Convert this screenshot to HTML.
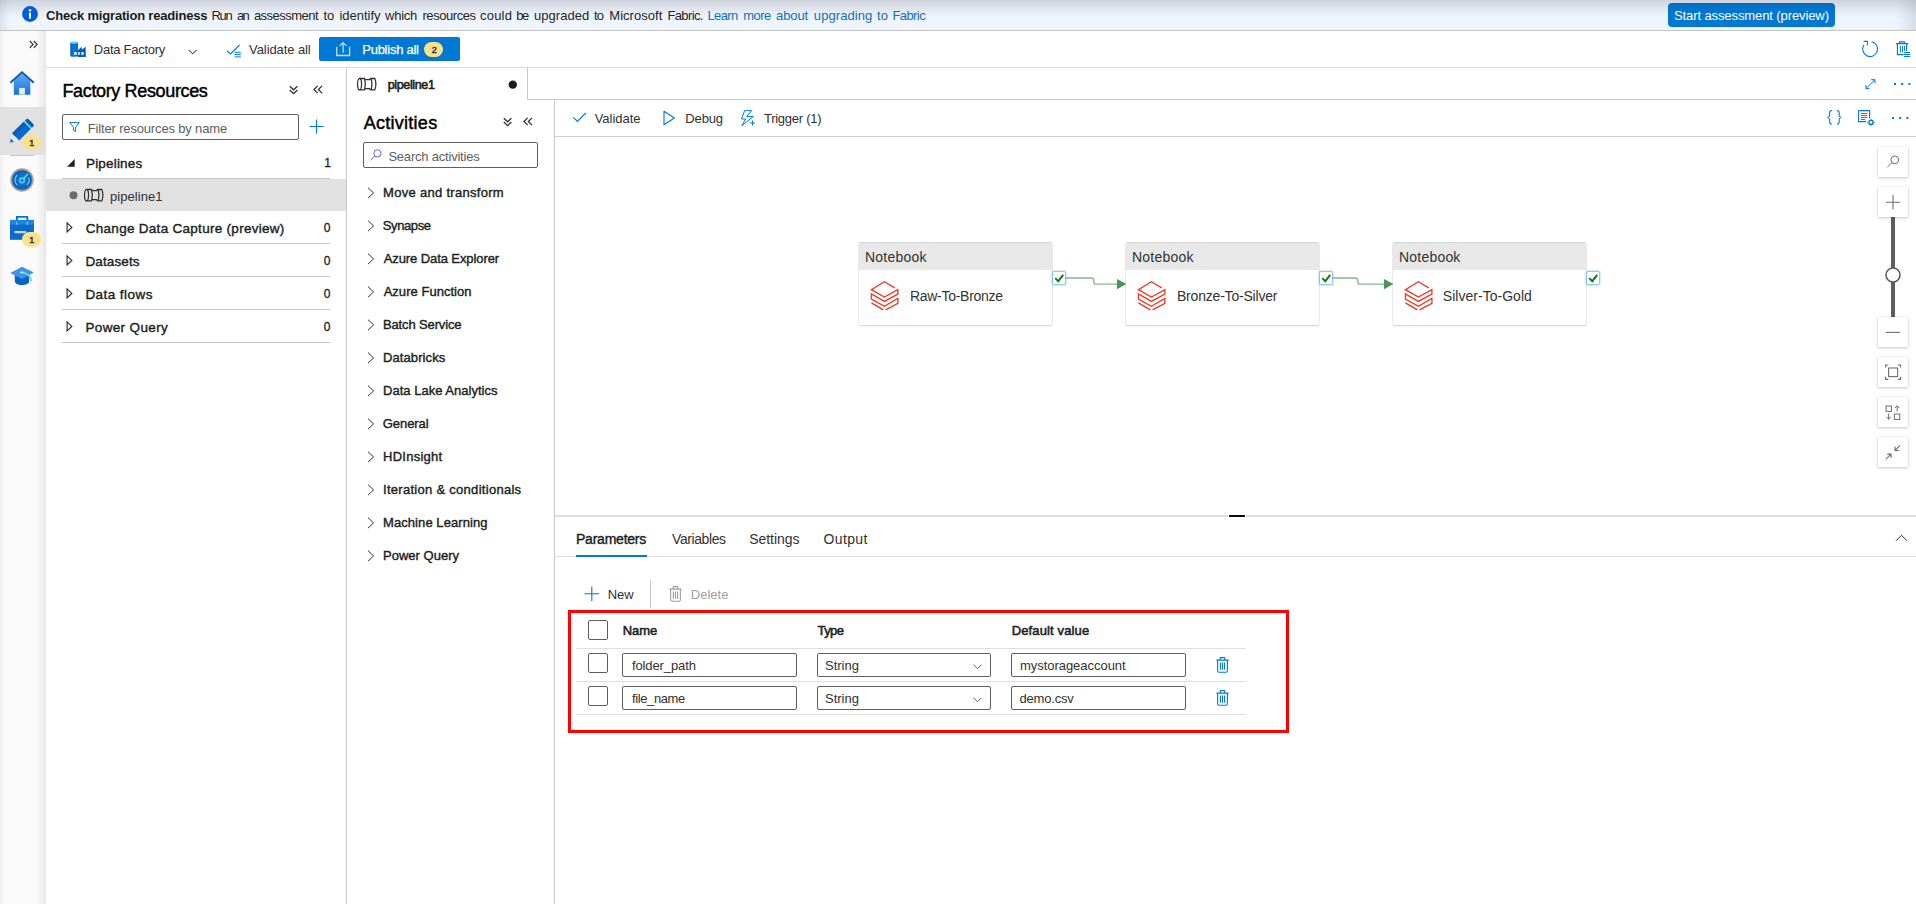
<!DOCTYPE html>
<html lang="en"><head><meta charset="utf-8"><title>pipeline1 - Azure Data Factory</title>
<style>
html,body{margin:0;padding:0}
body{width:1916px;height:904px;position:relative;overflow:hidden;background:#fff;font-family:"Liberation Sans",sans-serif;font-size:13px;color:#323130}
.t{position:absolute;white-space:pre;line-height:1.2}
.pb{display:inline-block;width:0;height:0}
.a{position:absolute;box-sizing:border-box}
svg{position:absolute;overflow:visible}
.ln{position:absolute;background:#c8c8c8}
.inp{position:absolute;box-sizing:border-box;border:1px solid #605e5c;border-radius:2px;background:#fff}
.cb{position:absolute;box-sizing:border-box;border:1px solid #605e5c;border-radius:2px;background:#fff}
.zb{position:absolute;box-sizing:border-box;width:30px;height:30px;background:#fff;box-shadow:0 1px 3px rgba(0,0,0,.22),0 0 1px rgba(0,0,0,.12)}
.node{position:absolute;box-sizing:border-box;width:194px;height:84px;border:1px solid #e9e9e9;border-top-color:#d2d2d2;border-bottom-color:#dadada;border-radius:3px;background:#fff;box-shadow:0 1px 1px rgba(0,0,0,.05)}
.node .hd{position:absolute;left:0;top:0;right:0;height:27px;background:#e8e8e8;border-radius:2px 2px 0 0}
.chk{position:absolute;box-sizing:border-box;width:12px;height:12px;background:#fff;border-radius:1px;box-shadow:0 0 2px 0.6px rgba(80,160,240,.8)}
</style></head>
<body>
<div class="a" style="left:0px;top:0px;width:1916px;height:31px;background:linear-gradient(#cfd3de 0,#d6dae4 4px,#dee3ec 8px,#e7ebf5 12px,#ecf2fb 16px,#eef5fe 20px,#eff5fe 100%);border-bottom:1px solid #c4c4c4"></div>
<div class="a" style="left:0px;top:0px;width:10px;height:30px;background:linear-gradient(90deg,rgba(120,125,145,.16),rgba(120,125,145,0))"></div>
<div class="a" style="left:1896px;top:0px;width:20px;height:30px;background:linear-gradient(270deg,rgba(120,125,145,.2),rgba(120,125,145,0))"></div>
<svg style="left:22px;top:6px" width="16" height="16" viewBox="0 0 16 16" ><circle cx="8" cy="8" r="7.9" fill="#015cda"/><rect x="7" y="6.6" width="2" height="6" fill="#fff"/><circle cx="8" cy="4.2" r="1.25" fill="#fff"/></svg>
<span class="t" style="font-size:13px;font-weight:700;color:#1b1a19;left:46.08px;top:8px;letter-spacing:-0.2px;">Check migration readiness</span>
<span class="t" style="font-size:13px;color:#242424;left:211.54px;top:8px;letter-spacing:-1.339px;">Run </span><span class="t" style="font-size:13px;color:#242424;left:237.08px;top:8px;letter-spacing:-1.82px;">an </span><span class="t" style="font-size:13px;color:#242424;left:253.91px;top:8px;letter-spacing:-0.517px;">assessment </span><span class="t" style="font-size:13px;color:#242424;left:323.44px;top:8px;letter-spacing:0.018px;">to </span><span class="t" style="font-size:13px;color:#242424;left:339.44px;top:8px;letter-spacing:-0.016px;">identify </span><span class="t" style="font-size:13px;color:#242424;left:385.02px;top:8px;letter-spacing:-0.252px;">which </span><span class="t" style="font-size:13px;color:#242424;left:422.44px;top:8px;letter-spacing:-0.427px;">resources </span><span class="t" style="font-size:13px;color:#242424;left:480.12px;top:8px;letter-spacing:0.168px;">could </span><span class="t" style="font-size:13px;color:#242424;left:516.28px;top:8px;letter-spacing:-1.6px;">be </span><span class="t" style="font-size:13px;color:#242424;left:533.9px;top:8px;letter-spacing:0.057px;">upgraded </span><span class="t" style="font-size:13px;color:#242424;left:593.97px;top:8px;letter-spacing:-0.722px;">to </span><span class="t" style="font-size:13px;color:#242424;left:609.33px;top:8px;letter-spacing:0.024px;">Microsoft </span><span class="t" style="font-size:13px;color:#242424;left:667.38px;top:8px;letter-spacing:-0.608px;">Fabric.</span>
<span class="t" style="font-size:13px;color:#106ebe;left:707.38px;top:8px;letter-spacing:-0.585px;">Learn </span><span class="t" style="font-size:13px;color:#106ebe;left:743.22px;top:8px;letter-spacing:-0.516px;">more </span><span class="t" style="font-size:13px;color:#106ebe;left:776.08px;top:8px;letter-spacing:-0.127px;">about </span><span class="t" style="font-size:13px;color:#106ebe;left:813.85px;top:8px;letter-spacing:0.07px;">upgrading </span><span class="t" style="font-size:13px;color:#106ebe;left:877.02px;top:8px;letter-spacing:0.228px;">to </span><span class="t" style="font-size:13px;color:#106ebe;left:892.38px;top:8px;letter-spacing:-0.566px;">Fabric</span>
<div class="a" style="left:1668px;top:3px;width:167px;height:24px;background:linear-gradient(#006cc0 0,#0072cb 5px,#0077d3 10px,#0078d4 100%);border-radius:4px"></div>
<span class="t" style="font-size:13px;color:#ffffff;left:1673.96px;top:8px;letter-spacing:-0.099px;">Start assessment (preview)</span>
<div class="a" style="left:46px;top:31px;width:1870px;height:37px;background:#fff;border-bottom:1px solid #dddbd9"></div>
<svg style="left:70px;top:41px" width="16" height="16" viewBox="0 0 16 16" ><defs><linearGradient id="gc" x1="0" y1="0" x2="1" y2="0"><stop offset="0" stop-color="#0b63c4"/><stop offset="0.5" stop-color="#0a78d6"/><stop offset="1" stop-color="#0b63c4"/></linearGradient></defs><path d="M7.9 9.2L11.5 5.8L12 8.5L15.6 5.8L15.9 15.9H7.9z" fill="#0a5cb0"/><path d="M0.2 1.8H7.95V15.2Q4.1 16.5 0.2 15.2z" fill="url(#gc)"/><ellipse cx="4.05" cy="1.75" rx="3.5" ry="1.15" fill="#45d6f7"/><rect x="3.9" y="11.1" width="2.9" height="2.7" fill="#cfe6fa"/><rect x="7.95" y="11.1" width="1.9" height="2.7" fill="#cfe6fa"/><rect x="11.1" y="11.1" width="2.7" height="2.7" fill="#cfe6fa"/></svg>
<span class="t" style="font-size:13px;left:93.81px;top:42px;letter-spacing:-0.265px;">Data Factory</span>
<svg style="left:188px;top:49px" width="10" height="6" viewBox="0 0 10 6" ><path d="M0.6 0.8L4.7 4.8L8.8 0.8" fill="none" stroke="#605e5c" stroke-width="1.1"/></svg>
<svg style="left:226px;top:44px" width="16" height="14" viewBox="0 0 16 14" ><path d="M0.8 6.6L4.4 10L13.6 1" fill="none" stroke="#0078d4" stroke-width="1.1"/><path d="M8.6 8.3h6.2M8.6 10.6h6.2M8.6 12.9h6.2" stroke="#0078d4" stroke-width="1"/></svg>
<span class="t" style="font-size:13px;left:249.08px;top:42px;letter-spacing:-0.092px;">Validate all</span>
<div class="a" style="left:319px;top:37px;width:141px;height:24px;background:#0078d4;border-radius:2px"></div>
<svg style="left:335px;top:41px" width="16" height="16" viewBox="0 0 16 16" ><path d="M1.7 5.8V14.5H14.6V5.8" fill="none" stroke="#c2dff6" stroke-width="1.3"/><path d="M8.1 11.8V1.8M4.8 4.9L8.1 1.6L11.4 4.9" fill="none" stroke="#c2dff6" stroke-width="1.3"/></svg>
<span class="t" style="font-size:13px;color:#ffffff;-webkit-text-stroke:0.25px #ffffff;left:362.25px;top:42px;letter-spacing:-0.252px;">Publish all</span>
<div class="a" style="left:423.6px;top:42px;width:19px;height:15px;background:#fae28c;border-radius:7.5px"></div>
<span class="t" style="font-size:9px;color:#2b2a29;-webkit-text-stroke:0.4px #2b2a29;left:431.77px;top:45px;letter-spacing:0.4px;">2</span>
<svg style="left:1861px;top:40px" width="18" height="18" viewBox="0 0 18 18" ><path d="M10.6 1.7A7.45 7.45 0 1 1 3 4.8" fill="none" stroke="#0078d4" stroke-width="1.1"/><path d="M2.6 1.4H6.4V5.2" fill="none" stroke="#0078d4" stroke-width="1.1"/></svg>
<svg style="left:1895px;top:41px" width="16" height="17" viewBox="0 0 16 17" ><path d="M0.9 2.6H13.2M4.6 2.4V0.9H9.4V2.4M2.4 2.8V13.6H8.6M11.6 2.8V10" fill="none" stroke="#0078d4" stroke-width="1.1"/><path d="M5.5 5v6.4M7.5 5v6.4M9.5 5v5" stroke="#0078d4" stroke-width="0.9"/><path d="M9 11.5h6.2M9 13.5h6.2M9 15.5h6.2" stroke="#0078d4" stroke-width="1"/></svg><div class="a" style="left:0px;top:31px;width:46px;height:873px;background:linear-gradient(90deg,#efefef 0,#f6f6f6 3px,#fafafa 7px,#fafafa 36px,#f3f3f3 40px,#eeeeee 43px,#e5e5e5 46px)"></div>
<div class="a" style="left:0px;top:107px;width:46px;height:48px;background:#e1e1e1"></div>
<div class="a" style="left:10px;top:155px;width:24px;height:1px;background:#c8c8c8"></div>
<svg style="left:29px;top:40px" width="9" height="9" viewBox="0 0 9 9" ><path d="M0.8 1L4.1 4.4L0.8 7.8M4.8 1L8.1 4.4L4.8 7.8" fill="none" stroke="#323130" stroke-width="1.2"/></svg>
<svg style="left:10px;top:71px" width="24" height="24" viewBox="0 0 24 24" ><defs><linearGradient id="gh" x1="0" y1="0" x2="0" y2="1"><stop offset="0" stop-color="#68a8f2"/><stop offset="1" stop-color="#1273dc"/></linearGradient></defs><path d="M3.8 23.7V9.8L12 2.4L20.3 9.8V23.7z" fill="url(#gh)"/><path d="M0.9 11.2L12 1.3L23.2 11.2" fill="none" stroke="#0a5cad" stroke-width="2" stroke-linecap="round" stroke-linejoin="miter"/><rect x="9.1" y="16.9" width="5.8" height="6.6" fill="#ebe9e6"/></svg>
<svg style="left:0px;top:0px" width="46" height="160" viewBox="0 0 46 160" style="left:0;top:0"><g transform="translate(9.9,142.7) rotate(-45)"><path d="M0 0L8.3 -5V5z" fill="#e6e8ec"/><path d="M0 0L3.6 -2.2V2.2z" fill="#1273dc"/><rect x="8.2" y="-5" width="16.4" height="10" fill="#0a68cc"/><rect x="8.2" y="-5" width="16.4" height="3.6" fill="#0a5fbe"/><rect x="24.5" y="-5" width="1.9" height="10" fill="#4cd5f5"/><path d="M26.3 -5H28Q29.8 -5 29.8 -3.2V3.2Q29.8 5 28 5H26.3z" fill="#0b5cb0"/></g></svg>
<div class="a" style="left:22.0px;top:134.9px;width:19px;height:15.2px;background:#fae28c;border-radius:7.6px"></div><span class="t" style="font-size:9px;color:#3b3a39;-webkit-text-stroke:0.5px #3b3a39;left:29.32px;top:137.8px;letter-spacing:-2.3px;">1</span>
<svg style="left:10px;top:168px" width="24" height="24" viewBox="0 0 24 24" ><defs><radialGradient id="gm" cx="0.5" cy="0.5" r="0.5"><stop offset="0" stop-color="#1a7fdc"/><stop offset="1" stop-color="#0a5fb8"/></radialGradient></defs><circle cx="12" cy="12" r="11.7" fill="#a6a6a6"/><circle cx="12" cy="12" r="10.6" fill="#8e8e8e"/><circle cx="12" cy="12" r="9.8" fill="url(#gm)"/><path d="M7.2 6.9A7.1 7.1 0 0 0 7.2 17.1" fill="none" stroke="#55d2f5" stroke-width="1.2"/><path d="M18.7 9.4A7.1 7.1 0 0 1 16.8 17.1" fill="none" stroke="#55d2f5" stroke-width="1.2"/><circle cx="12" cy="12.4" r="2.3" fill="none" stroke="#55d2f5" stroke-width="1.5"/><path d="M13.6 10.7L17.9 5.9" stroke="#55d2f5" stroke-width="1.7"/></svg>
<svg style="left:10px;top:215px" width="24" height="25" viewBox="0 0 24 25" ><path d="M6.9 5V1.9h10.4V5" fill="none" stroke="#0f6fd2" stroke-width="1.9"/><rect x="0" y="4.9" width="24" height="4.2" fill="#1d86e2"/><rect x="0" y="9.1" width="24" height="15.7" fill="#0b6ad0"/><rect x="6" y="6.8" width="1.5" height="3.2" rx="0.7" fill="#45d6f7"/><rect x="16.6" y="6.8" width="1.5" height="3.2" rx="0.7" fill="#45d6f7"/><rect x="4.2" y="15.9" width="12" height="2.3" rx="1.1" fill="#d3d6da"/></svg>
<div class="a" style="left:22.0px;top:232.0px;width:19px;height:15.2px;background:#fae28c;border-radius:7.6px"></div><span class="t" style="font-size:9px;color:#3b3a39;-webkit-text-stroke:0.5px #3b3a39;left:29.32px;top:234.9px;letter-spacing:-2.3px;">1</span>
<svg style="left:10px;top:266px" width="24" height="20" viewBox="0 0 24 20" ><path d="M4.8 8.6v6.6c0 2.2 3.2 3.9 7.2 3.9s7.2-1.7 7.2-3.9V8.6z" fill="#0b63c4"/><path d="M12 0.8L0.2 6.9L12 13L23.8 6.6z" fill="#3f92e6"/><path d="M12 6.4c4.6 0.6 8.2 2.8 9.6 8.6" fill="none" stroke="#5fd8f0" stroke-width="1.6"/><ellipse cx="11.8" cy="6.4" rx="1.8" ry="0.9" fill="#d6ecfb"/></svg>
<div class="a" style="left:346px;top:68px;width:1px;height:836px;background:#c8c8c8"></div>
<span class="t" style="font-size:18px;color:#000000;-webkit-text-stroke:0.45px #000000;left:62.45px;top:81px;letter-spacing:-0.354px;">Factory Resources</span>
<svg style="left:289px;top:85px" width="10" height="10" viewBox="0 0 10 10" ><path d="M0.8 1.2L4.6 4.8L8.4 1.2M0.8 5L4.6 8.6L8.4 5" fill="none" stroke="#323130" stroke-width="1.3"/></svg>
<svg style="left:313px;top:85px" width="10" height="9" viewBox="0 0 10 9" ><path d="M4.6 0.9L1 4.5L4.6 8.1M9 0.9L5.4 4.5L9 8.1" fill="none" stroke="#323130" stroke-width="1.3"/></svg>
<div class="inp" style="left:62px;top:114px;width:237px;height:26px"></div>
<svg style="left:69px;top:122px" width="12" height="11" viewBox="0 0 12 11" ><path d="M0.7 0.6H10.3L6.6 5.2V9.6L4.4 8.4V5.2z" fill="none" stroke="#0078d4" stroke-width="1" stroke-linejoin="round"/></svg>
<span class="t" style="font-size:13px;color:#605e5c;left:87.81px;top:121px;letter-spacing:-0.162px;">Filter resources by name</span>
<svg style="left:309px;top:119px" width="15" height="15" viewBox="0 0 15 15" ><path d="M7.5 0.4V14.6M0.4 7.5H14.6" stroke="#0078d4" stroke-width="1.1"/></svg>
<svg style="left:66px;top:158px" width="10" height="10" viewBox="0 0 10 10" ><path d="M8.7 1.1V8.7H1.1z" fill="#201f1e"/></svg>
<span class="t" style="font-size:13.5px;color:#201f1e;-webkit-text-stroke:0.4px #201f1e;left:86.01px;top:156px;letter-spacing:0.176px;">Pipelines</span>
<span class="t" style="font-size:12px;color:#201f1e;-webkit-text-stroke:0.3px #201f1e;left:324.18px;top:156px;letter-spacing:-3.3px;">1</span>
<div class="a" style="left:62px;top:178px;width:268px;height:1px;background:#c8c8c8"></div>
<div class="a" style="left:46px;top:179px;width:300px;height:32px;background:#e1e1e1"></div>
<svg style="left:69px;top:191px" width="9" height="9" viewBox="0 0 9 9" ><circle cx="4.5" cy="4.2" r="4" fill="#6b6b6b"/></svg>
<svg style="left:84px;top:188.8px" width="20" height="12.4" viewBox="0 0 20 11.7" preserveAspectRatio="none"><ellipse cx="2.55" cy="5.85" rx="2" ry="5.35" fill="none" stroke="#323130" stroke-width="1.25"/><path d="M2.55 0.5H7.6Q9.1 5.85 7.6 11.2H2.55M8.3 1.6H12.7Q12.8 0.5 13.7 0.5H17.8Q20 5.85 17.8 11.2H13.7Q12.8 11.2 12.7 10.1H8.3M14.3 0.5Q15.7 5.85 14.3 11.2" fill="none" stroke="#323130" stroke-width="1.25"/></svg>
<span class="t" style="font-size:13px;left:109.91px;top:189.3px;letter-spacing:0.063px;">pipeline1</span>
<svg style="left:66px;top:222.4px" width="8" height="11" viewBox="0 0 8 11" ><path d="M1.1 0.9L5.8 5.4L1.1 9.9z" fill="none" stroke="#323130" stroke-width="1.2"/></svg>
<span class="t" style="font-size:13.5px;color:#201f1e;-webkit-text-stroke:0.4px #201f1e;left:85.75px;top:221px;letter-spacing:0.286px;">Change Data Capture (preview)</span>
<span class="t" style="font-size:12px;color:#201f1e;-webkit-text-stroke:0.3px #201f1e;left:323.71px;top:221px;letter-spacing:-1.3px;">0</span>
<div class="a" style="left:62px;top:243px;width:268px;height:1px;background:#c8c8c8"></div>
<svg style="left:66px;top:255.4px" width="8" height="11" viewBox="0 0 8 11" ><path d="M1.1 0.9L5.8 5.4L1.1 9.9z" fill="none" stroke="#323130" stroke-width="1.2"/></svg>
<span class="t" style="font-size:13.5px;color:#201f1e;-webkit-text-stroke:0.4px #201f1e;left:85.42px;top:254px;letter-spacing:0.131px;">Datasets</span>
<span class="t" style="font-size:12px;color:#201f1e;-webkit-text-stroke:0.3px #201f1e;left:323.71px;top:254px;letter-spacing:-1.3px;">0</span>
<div class="a" style="left:62px;top:276px;width:268px;height:1px;background:#c8c8c8"></div>
<svg style="left:66px;top:288.4px" width="8" height="11" viewBox="0 0 8 11" ><path d="M1.1 0.9L5.8 5.4L1.1 9.9z" fill="none" stroke="#323130" stroke-width="1.2"/></svg>
<span class="t" style="font-size:13.5px;color:#201f1e;-webkit-text-stroke:0.4px #201f1e;left:85.42px;top:287px;letter-spacing:0.44px;">Data flows</span>
<span class="t" style="font-size:12px;color:#201f1e;-webkit-text-stroke:0.3px #201f1e;left:323.71px;top:287px;letter-spacing:-1.3px;">0</span>
<div class="a" style="left:62px;top:309px;width:268px;height:1px;background:#c8c8c8"></div>
<svg style="left:66px;top:321.4px" width="8" height="11" viewBox="0 0 8 11" ><path d="M1.1 0.9L5.8 5.4L1.1 9.9z" fill="none" stroke="#323130" stroke-width="1.2"/></svg>
<span class="t" style="font-size:13.5px;color:#201f1e;-webkit-text-stroke:0.4px #201f1e;left:85.42px;top:320px;letter-spacing:0.357px;">Power Query</span>
<span class="t" style="font-size:12px;color:#201f1e;-webkit-text-stroke:0.3px #201f1e;left:323.71px;top:320px;letter-spacing:-1.3px;">0</span>
<div class="a" style="left:62px;top:342px;width:268px;height:1px;background:#c8c8c8"></div><div class="a" style="left:527px;top:68px;width:1389px;height:32px;border-left:1px solid #c8c8c8;border-bottom:1px solid #c8c8c8"></div>
<svg style="left:357px;top:77.6px" width="20" height="12.4" viewBox="0 0 20 11.7" preserveAspectRatio="none"><ellipse cx="2.55" cy="5.85" rx="2" ry="5.35" fill="none" stroke="#323130" stroke-width="1.25"/><path d="M2.55 0.5H7.6Q9.1 5.85 7.6 11.2H2.55M8.3 1.6H12.7Q12.8 0.5 13.7 0.5H17.8Q20 5.85 17.8 11.2H13.7Q12.8 11.2 12.7 10.1H8.3M14.3 0.5Q15.7 5.85 14.3 11.2" fill="none" stroke="#323130" stroke-width="1.25"/></svg>
<span class="t" style="font-size:12.5px;color:#201f1e;-webkit-text-stroke:0.6px #201f1e;left:387.74px;top:78px;letter-spacing:-0.363px;">pipeline1</span>
<svg style="left:508.4px;top:79.5px" width="10" height="10" viewBox="0 0 10 10" ><circle cx="4.8" cy="4.6" r="4.2" fill="#1b1a19"/></svg>
<svg style="left:1864px;top:78px" width="12" height="12" viewBox="0 0 12 12" ><path d="M2 10.6L10.8 1.8M7.2 1.7H10.9V5.4M1.9 7V10.7H5.6" fill="none" stroke="#0078d4" stroke-width="1"/></svg>
<svg style="left:1894.2px;top:83px" width="20" height="3" viewBox="0 0 20 3" ><rect x="0.0" y="0" width="2" height="2" fill="#0078d4"/><rect x="7.2" y="0" width="2" height="2" fill="#0078d4"/><rect x="14.4" y="0" width="2" height="2" fill="#0078d4"/></svg>
<div class="a" style="left:554px;top:100px;width:1px;height:804px;background:#c8c8c8"></div>
<span class="t" style="font-size:18px;color:#000000;-webkit-text-stroke:0.45px #000000;left:363.67px;top:112.8px;letter-spacing:0.275px;">Activities</span>
<svg style="left:503px;top:117px" width="10" height="10" viewBox="0 0 10 10" ><path d="M0.8 1.2L4.6 4.8L8.4 1.2M0.8 5L4.6 8.6L8.4 5" fill="none" stroke="#323130" stroke-width="1.3"/></svg>
<svg style="left:523px;top:117px" width="10" height="9" viewBox="0 0 10 9" ><path d="M4.6 0.9L1 4.5L4.6 8.1M9 0.9L5.4 4.5L9 8.1" fill="none" stroke="#323130" stroke-width="1.3"/></svg>
<div class="inp" style="left:363px;top:142px;width:175px;height:26px"></div>
<svg style="left:370px;top:149px" width="12" height="12" viewBox="0 0 12 12" ><circle cx="7.4" cy="4.4" r="3.6" fill="none" stroke="#5a6ad6" stroke-width="1"/><path d="M4.8 7L0.6 11.2" stroke="#5a6ad6" stroke-width="1"/></svg>
<span class="t" style="font-size:13px;color:#605e5c;left:388.39px;top:149px;letter-spacing:-0.207px;">Search activities</span>
<svg style="left:367px;top:187px" width="8" height="12" viewBox="0 0 8 12" ><path d="M1 0.7L6.6 5.9L1 11.1" fill="none" stroke="#323130" stroke-width="1"/></svg>
<span class="t" style="font-size:13px;color:#201f1e;-webkit-text-stroke:0.4px #201f1e;left:383.0px;top:185px;letter-spacing:0.299px;">Move and transform</span>
<svg style="left:367px;top:220px" width="8" height="12" viewBox="0 0 8 12" ><path d="M1 0.7L6.6 5.9L1 11.1" fill="none" stroke="#323130" stroke-width="1"/></svg>
<span class="t" style="font-size:13px;color:#201f1e;-webkit-text-stroke:0.4px #201f1e;left:382.74px;top:218px;letter-spacing:-0.373px;">Synapse</span>
<svg style="left:367px;top:253px" width="8" height="12" viewBox="0 0 8 12" ><path d="M1 0.7L6.6 5.9L1 11.1" fill="none" stroke="#323130" stroke-width="1"/></svg>
<span class="t" style="font-size:13px;color:#201f1e;-webkit-text-stroke:0.4px #201f1e;left:383.64px;top:251px;letter-spacing:-0.083px;">Azure Data Explorer</span>
<svg style="left:367px;top:286px" width="8" height="12" viewBox="0 0 8 12" ><path d="M1 0.7L6.6 5.9L1 11.1" fill="none" stroke="#323130" stroke-width="1"/></svg>
<span class="t" style="font-size:13px;color:#201f1e;-webkit-text-stroke:0.4px #201f1e;left:383.64px;top:284px;letter-spacing:0.034px;">Azure Function</span>
<svg style="left:367px;top:319px" width="8" height="12" viewBox="0 0 8 12" ><path d="M1 0.7L6.6 5.9L1 11.1" fill="none" stroke="#323130" stroke-width="1"/></svg>
<span class="t" style="font-size:13px;color:#201f1e;-webkit-text-stroke:0.4px #201f1e;left:383.0px;top:317px;letter-spacing:-0.141px;">Batch Service</span>
<svg style="left:367px;top:352px" width="8" height="12" viewBox="0 0 8 12" ><path d="M1 0.7L6.6 5.9L1 11.1" fill="none" stroke="#323130" stroke-width="1"/></svg>
<span class="t" style="font-size:13px;color:#201f1e;-webkit-text-stroke:0.4px #201f1e;left:383.0px;top:350px;letter-spacing:0.095px;">Databricks</span>
<svg style="left:367px;top:385px" width="8" height="12" viewBox="0 0 8 12" ><path d="M1 0.7L6.6 5.9L1 11.1" fill="none" stroke="#323130" stroke-width="1"/></svg>
<span class="t" style="font-size:13px;color:#201f1e;-webkit-text-stroke:0.4px #201f1e;left:383.0px;top:383px;letter-spacing:0.015px;">Data Lake Analytics</span>
<svg style="left:367px;top:418px" width="8" height="12" viewBox="0 0 8 12" ><path d="M1 0.7L6.6 5.9L1 11.1" fill="none" stroke="#323130" stroke-width="1"/></svg>
<span class="t" style="font-size:13px;color:#201f1e;-webkit-text-stroke:0.4px #201f1e;left:382.74px;top:416px;letter-spacing:-0.057px;">General</span>
<svg style="left:367px;top:451px" width="8" height="12" viewBox="0 0 8 12" ><path d="M1 0.7L6.6 5.9L1 11.1" fill="none" stroke="#323130" stroke-width="1"/></svg>
<span class="t" style="font-size:13px;color:#201f1e;-webkit-text-stroke:0.4px #201f1e;left:383.0px;top:449px;letter-spacing:0.267px;">HDInsight</span>
<svg style="left:367px;top:484px" width="8" height="12" viewBox="0 0 8 12" ><path d="M1 0.7L6.6 5.9L1 11.1" fill="none" stroke="#323130" stroke-width="1"/></svg>
<span class="t" style="font-size:13px;color:#201f1e;-webkit-text-stroke:0.4px #201f1e;left:383.0px;top:482px;letter-spacing:0.286px;">Iteration &amp; conditionals</span>
<svg style="left:367px;top:517px" width="8" height="12" viewBox="0 0 8 12" ><path d="M1 0.7L6.6 5.9L1 11.1" fill="none" stroke="#323130" stroke-width="1"/></svg>
<span class="t" style="font-size:13px;color:#201f1e;-webkit-text-stroke:0.4px #201f1e;left:383.0px;top:515px;letter-spacing:0.078px;">Machine Learning</span>
<svg style="left:367px;top:550px" width="8" height="12" viewBox="0 0 8 12" ><path d="M1 0.7L6.6 5.9L1 11.1" fill="none" stroke="#323130" stroke-width="1"/></svg>
<span class="t" style="font-size:13px;color:#201f1e;-webkit-text-stroke:0.4px #201f1e;left:383.0px;top:548px;letter-spacing:0.024px;">Power Query</span>
<div class="a" style="left:555px;top:136px;width:1361px;height:1px;background:#d2d0ce"></div>
<svg style="left:572px;top:112px" width="15" height="11" viewBox="0 0 15 11" ><path d="M1.4 5.4L5.4 9.4L13.8 1" fill="none" stroke="#0078d4" stroke-width="1.1"/></svg>
<span class="t" style="font-size:13px;left:594.71px;top:111px;letter-spacing:-0.038px;">Validate</span>
<svg style="left:662.5px;top:110px" width="13" height="16" viewBox="0 0 13 16" ><path d="M1 1.2L11.4 8L1 14.8z" fill="none" stroke="#0078d4" stroke-width="1.1" stroke-linejoin="round"/></svg>
<span class="t" style="font-size:13px;left:685.33px;top:111px;letter-spacing:-0.152px;">Debug</span>
<svg style="left:741px;top:110px" width="14" height="16" viewBox="0 0 14 16" ><path d="M3.6 0.6H10.7L5.7 6.6H12.3L0.8 15.6L4.7 9H0.5z" fill="none" stroke="#0078d4" stroke-width="1" stroke-linejoin="miter"/><rect x="8.6" y="10.2" width="6" height="6" fill="#fff"/><path d="M11.5 10.6V15.4M9.1 13H13.9" stroke="#0078d4" stroke-width="1.1"/></svg>
<span class="t" style="font-size:13px;left:763.97px;top:111px;letter-spacing:-0.261px;">Trigger (1)</span>
<svg style="left:1827px;top:110px" width="15" height="15" viewBox="0 0 15 15" ><path transform="translate(-0.6 0) scale(1.08 1)" d="M5.2 0.6C3.4 0.6 3 1.4 3 2.8V5c0 1.2-0.6 2.2-2 2.4 1.4 0.2 2 1.2 2 2.4v2.2c0 1.4 0.4 2.2 2.2 2.2M9.6 0.6c1.8 0 2.2 0.8 2.2 2.2V5c0 1.2 0.6 2.2 2 2.4-1.4 0.2-2 1.2-2 2.4v2.2c0 1.4-0.4 2.2-2.2 2.2" fill="none" stroke="#0078d4" stroke-width="1"/></svg>
<svg style="left:1858px;top:110px" width="17" height="16" viewBox="0 0 17 16" ><path d="M0.6 0.6H11.6V8.4M0.6 0.6V11.6H8.2" fill="none" stroke="#0078d4" stroke-width="1.1"/><path d="M2.8 3.5H9.4M2.8 5.5H9.4M2.8 7.5H9.4M2.8 9.5H7.2" stroke="#0078d4" stroke-width="0.9"/><circle cx="13" cy="12.4" r="2" fill="none" stroke="#0078d4" stroke-width="1.2"/><path d="M13 8.8v1.4M13 14.6V16M9.4 12.4h1.4M15.2 12.4h1.4M10.5 9.9l1 1M14.5 13.9l1 1M15.5 9.9l-1 1M11.5 13.9l-1 1" stroke="#0078d4" stroke-width="1"/></svg>
<svg style="left:1892px;top:117px" width="20" height="3" viewBox="0 0 20 3" ><rect x="0.0" y="0" width="2" height="2" fill="#0078d4"/><rect x="7.2" y="0" width="2" height="2" fill="#0078d4"/><rect x="14.4" y="0" width="2" height="2" fill="#0078d4"/></svg><div class="node" style="left:858px;top:242px;width:195px;height:84px"><div class="hd"></div></div><span class="t" style="font-size:14px;color:#333333;left:864.97px;top:249.2px;letter-spacing:0.213px;">Notebook</span><svg style="left:864px;top:274px" width="42" height="42" viewBox="0 0 42 42" ><path d="M30.7 13.9L20.4 7.7L7.4 15.7L20.4 23L33.9 15.6V20.2L20.4 27.4L7.4 20V25.1L20.4 32.3L33.9 24.4V29.3L21.6 35.8M19.4 35.8L7.4 28.8" fill="none" stroke="#ec3a26" stroke-width="1.35" stroke-linejoin="miter"/></svg><span class="t" style="font-size:14px;color:#333333;left:909.97px;top:288px;letter-spacing:-0.286px;">Raw-To-Bronze</span><div class="chk" style="left:1053.0px;top:272px"></div><svg style="left:1053px;top:272px" width="12" height="12" viewBox="0 0 12 12" ><path d="M2.2 6.1L5.3 9.2L10.2 2.8" fill="none" stroke="#107c10" stroke-width="2"/></svg>
<div class="node" style="left:1125px;top:242px;width:195px;height:84px"><div class="hd"></div></div><span class="t" style="font-size:14px;color:#333333;left:1131.97px;top:249.2px;letter-spacing:0.213px;">Notebook</span><svg style="left:1131px;top:274px" width="42" height="42" viewBox="0 0 42 42" ><path d="M30.7 13.9L20.4 7.7L7.4 15.7L20.4 23L33.9 15.6V20.2L20.4 27.4L7.4 20V25.1L20.4 32.3L33.9 24.4V29.3L21.6 35.8M19.4 35.8L7.4 28.8" fill="none" stroke="#ec3a26" stroke-width="1.35" stroke-linejoin="miter"/></svg><span class="t" style="font-size:14px;color:#333333;left:1176.97px;top:288px;letter-spacing:-0.198px;">Bronze-To-Silver</span><div class="chk" style="left:1320.0px;top:272px"></div><svg style="left:1320px;top:272px" width="12" height="12" viewBox="0 0 12 12" ><path d="M2.2 6.1L5.3 9.2L10.2 2.8" fill="none" stroke="#107c10" stroke-width="2"/></svg>
<div class="node" style="left:1392px;top:242px;width:195px;height:84px"><div class="hd"></div></div><span class="t" style="font-size:14px;color:#333333;left:1398.96px;top:249.2px;letter-spacing:0.213px;">Notebook</span><svg style="left:1398px;top:274px" width="42" height="42" viewBox="0 0 42 42" ><path d="M30.7 13.9L20.4 7.7L7.4 15.7L20.4 23L33.9 15.6V20.2L20.4 27.4L7.4 20V25.1L20.4 32.3L33.9 24.4V29.3L21.6 35.8M19.4 35.8L7.4 28.8" fill="none" stroke="#ec3a26" stroke-width="1.35" stroke-linejoin="miter"/></svg><span class="t" style="font-size:14px;color:#333333;left:1442.81px;top:288px;letter-spacing:0.027px;">Silver-To-Gold</span><div class="chk" style="left:1587.0px;top:272px"></div><svg style="left:1587px;top:272px" width="12" height="12" viewBox="0 0 12 12" ><path d="M2.2 6.1L5.3 9.2L10.2 2.8" fill="none" stroke="#107c10" stroke-width="2"/></svg>
<svg style="left:0px;top:0px" width="1916" height="904" viewBox="0 0 1916 904" style="left:0;top:0;pointer-events:none"><path d="M1065.0 278H1091.6q2.2 0 2.2 2.2v1.7q0 2.2 2.2 2.2H1117.0" fill="none" stroke="#84b88f" stroke-width="1.35"/><path d="M1117.0 279V289.2L1126.4 284.1z" fill="#4a9455"/></svg>
<svg style="left:0px;top:0px" width="1916" height="904" viewBox="0 0 1916 904" style="left:0;top:0;pointer-events:none"><path d="M1332.0 278H1355.6q2.2 0 2.2 2.2v1.7q0 2.2 2.2 2.2H1384.0" fill="none" stroke="#84b88f" stroke-width="1.35"/><path d="M1384.0 279V289.2L1393.4 284.1z" fill="#4a9455"/></svg>
<div class="a" style="left:1891px;top:216px;width:4px;height:102px;background:#605e5c"></div>
<div class="zb" style="left:1878px;top:147px"></div>
<div class="zb" style="left:1878px;top:187px"></div>
<div class="zb" style="left:1878px;top:317px"></div>
<div class="zb" style="left:1878px;top:357px"></div>
<div class="zb" style="left:1878px;top:397px"></div>
<div class="zb" style="left:1878px;top:437px"></div>
<svg style="left:1878px;top:147px" width="30" height="30" viewBox="0 0 30 30" ><circle cx="16.8" cy="12.8" r="3.9" fill="none" stroke="#6e6e6e" stroke-width="1"/><path d="M14 15.6L9.4 20.2" stroke="#6e6e6e" stroke-width="1"/></svg>
<svg style="left:1878px;top:187px" width="30" height="30" viewBox="0 0 30 30" ><path d="M15 8V22.4M7.8 15.2H22.2" stroke="#6e6e6e" stroke-width="1.1"/></svg>
<svg style="left:1883px;top:265px" width="20" height="20" viewBox="0 0 20 20" ><circle cx="10" cy="10" r="7" fill="#fff" stroke="#605e5c" stroke-width="1.6"/></svg>
<svg style="left:1878px;top:317px" width="30" height="30" viewBox="0 0 30 30" ><path d="M7.8 15.4H22.2" stroke="#6e6e6e" stroke-width="1.1"/></svg>
<svg style="left:1878px;top:357px" width="30" height="30" viewBox="0 0 30 30" ><rect x="10.6" y="11" width="9" height="8.6" fill="none" stroke="#6e6e6e" stroke-width="1.1"/><path d="M7.6 10.6V8H10.4M19.8 8H22.6V10.6M22.6 19.8V22.4H19.8M10.4 22.4H7.6V19.8" fill="none" stroke="#6e6e6e" stroke-width="1.1"/></svg>
<svg style="left:1878px;top:397px" width="30" height="30" viewBox="0 0 30 30" ><rect x="8" y="9" width="5.4" height="5.4" fill="none" stroke="#6e6e6e" stroke-width="1"/><rect x="16.4" y="17" width="5.4" height="5.4" fill="none" stroke="#6e6e6e" stroke-width="1"/><path d="M19.2 14.6V8.8M17 11L19.2 8.8L21.4 11M10.6 16.6V22.2M8.4 20L10.6 22.2L12.8 20" fill="none" stroke="#6e6e6e" stroke-width="1"/></svg>
<svg style="left:1878px;top:437px" width="30" height="30" viewBox="0 0 30 30" ><path d="M22 8.4L17 13.4M17 9.6V13.5H20.9M8 22.2L13 17.2M9.2 17.1H13.1V21" fill="none" stroke="#6e6e6e" stroke-width="1.1"/></svg><div class="a" style="left:555px;top:515px;width:1361px;height:2px;background:#dedede"></div>
<div class="a" style="left:1228px;top:515px;width:18px;height:2px;background:#fff"></div>
<div class="a" style="left:1229px;top:515px;width:16px;height:2px;background:#0a0a0a;border-radius:0.5px"></div>
<div class="a" style="left:555px;top:556px;width:1361px;height:1px;background:#e1dfdd"></div>
<span class="t" style="font-size:14px;color:#201f1e;-webkit-text-stroke:0.4px #201f1e;left:576.0px;top:530.7px;letter-spacing:-0.231px;">Parameters</span>
<div class="a" style="left:576px;top:555px;width:71px;height:2px;background:#0078d4"></div>
<span class="t" style="font-size:14px;left:672.02px;top:530.7px;letter-spacing:-0.411px;">Variables</span>
<span class="t" style="font-size:14px;left:749.22px;top:530.7px;letter-spacing:-0.047px;">Settings</span>
<span class="t" style="font-size:14px;left:823.54px;top:530.7px;letter-spacing:0.36px;">Output</span>
<svg style="left:1895px;top:534px" width="13" height="8" viewBox="0 0 13 8" ><path d="M1 6.8L6.5 1.3L12 6.8" fill="none" stroke="#323130" stroke-width="1"/></svg>
<svg style="left:584px;top:586px" width="16" height="16" viewBox="0 0 16 16" ><path d="M7.8 0.4V15.2M0.4 7.8H15.2" stroke="#0078d4" stroke-width="1.1"/></svg>
<span class="t" style="font-size:13px;left:607.8px;top:586.6px;letter-spacing:-0.099px;">New</span>
<div class="a" style="left:650px;top:580px;width:1px;height:28px;background:#c8c6c4"></div>
<svg style="left:668.6px;top:586.2px" width="13" height="16" viewBox="0 0 13 16" ><path d="M0.4 3.1H12.6M4.2 2.9V1.1C4.2 0.8 4.4 0.6 4.7 0.6H8.3C8.6 0.6 8.8 0.8 8.8 1.1V2.9M1.6 3.3V13.8C1.6 14.7 2.2 15.3 3.1 15.3H9.9C10.8 15.3 11.4 14.7 11.4 13.8V3.3" fill="none" stroke="#a19f9d" stroke-width="1.1"/><path d="M4.4 5.6V12.8M6.5 5.6V12.8M8.6 5.6V12.8" stroke="#a19f9d" stroke-width="1.1"/></svg>
<span class="t" style="font-size:13px;color:#a19f9d;left:690.8px;top:586.6px;letter-spacing:0.014px;">Delete</span>
<div class="a" style="left:567.5px;top:609.6px;width:721.4px;height:123px;border:3px solid #ff0000"></div>
<div class="cb" style="left:588px;top:620px;width:20px;height:20px"></div>
<span class="t" style="font-size:13px;color:#201f1e;-webkit-text-stroke:0.55px #201f1e;left:622.82px;top:623px;letter-spacing:-0.106px;">Name</span>
<span class="t" style="font-size:13px;color:#201f1e;-webkit-text-stroke:0.55px #201f1e;left:817.5px;top:623px;letter-spacing:-0.555px;">Type</span>
<span class="t" style="font-size:13px;color:#201f1e;-webkit-text-stroke:0.55px #201f1e;left:1011.66px;top:623px;letter-spacing:0.137px;">Default value</span>
<div class="a" style="left:576px;top:648px;width:670px;height:1px;background:#e1dfdd"></div>
<div class="cb" style="left:588px;top:653px;width:20px;height:20px"></div>
<div class="inp" style="left:622px;top:653px;width:175px;height:24px"></div>
<span class="t" style="font-size:13px;left:631.97px;top:658px;letter-spacing:-0.114px;">folder_path</span>
<div class="inp" style="left:817px;top:653px;width:174px;height:24px"></div>
<span class="t" style="font-size:13px;left:824.97px;top:658px;letter-spacing:-0.01px;">String</span>
<svg style="left:973px;top:664px" width="10" height="6" viewBox="0 0 10 6" ><path d="M0.6 0.8L4.5 4.7L8.4 0.8" fill="none" stroke="#605e5c" stroke-width="1"/></svg>
<div class="inp" style="left:1011px;top:653px;width:175px;height:24px"></div>
<span class="t" style="font-size:13px;left:1019.9px;top:658px;letter-spacing:-0.03px;">mystorageaccount</span>
<svg style="left:1215.6px;top:657px" width="13" height="16" viewBox="0 0 13 16" ><path d="M0.4 3.1H12.6M4.2 2.9V1.1C4.2 0.8 4.4 0.6 4.7 0.6H8.3C8.6 0.6 8.8 0.8 8.8 1.1V2.9M1.6 3.3V13.8C1.6 14.7 2.2 15.3 3.1 15.3H9.9C10.8 15.3 11.4 14.7 11.4 13.8V3.3" fill="none" stroke="#0078d4" stroke-width="1.1"/><path d="M4.4 5.6V12.8M6.5 5.6V12.8M8.6 5.6V12.8" stroke="#0078d4" stroke-width="1.1"/></svg>
<div class="a" style="left:576px;top:681px;width:670px;height:1px;background:#e1dfdd"></div>
<div class="cb" style="left:588px;top:686px;width:20px;height:20px"></div>
<div class="inp" style="left:622px;top:686px;width:175px;height:24px"></div>
<span class="t" style="font-size:13px;left:631.97px;top:691px;letter-spacing:-0.38px;">file_name</span>
<div class="inp" style="left:817px;top:686px;width:174px;height:24px"></div>
<span class="t" style="font-size:13px;left:824.97px;top:691px;letter-spacing:-0.01px;">String</span>
<svg style="left:973px;top:697px" width="10" height="6" viewBox="0 0 10 6" ><path d="M0.6 0.8L4.5 4.7L8.4 0.8" fill="none" stroke="#605e5c" stroke-width="1"/></svg>
<div class="inp" style="left:1011px;top:686px;width:175px;height:24px"></div>
<span class="t" style="font-size:13px;left:1019.54px;top:691px;letter-spacing:-0.207px;">demo.csv</span>
<svg style="left:1215.6px;top:690px" width="13" height="16" viewBox="0 0 13 16" ><path d="M0.4 3.1H12.6M4.2 2.9V1.1C4.2 0.8 4.4 0.6 4.7 0.6H8.3C8.6 0.6 8.8 0.8 8.8 1.1V2.9M1.6 3.3V13.8C1.6 14.7 2.2 15.3 3.1 15.3H9.9C10.8 15.3 11.4 14.7 11.4 13.8V3.3" fill="none" stroke="#0078d4" stroke-width="1.1"/><path d="M4.4 5.6V12.8M6.5 5.6V12.8M8.6 5.6V12.8" stroke="#0078d4" stroke-width="1.1"/></svg>
<div class="a" style="left:576px;top:714px;width:670px;height:1px;background:#e1dfdd"></div>
</body></html>
